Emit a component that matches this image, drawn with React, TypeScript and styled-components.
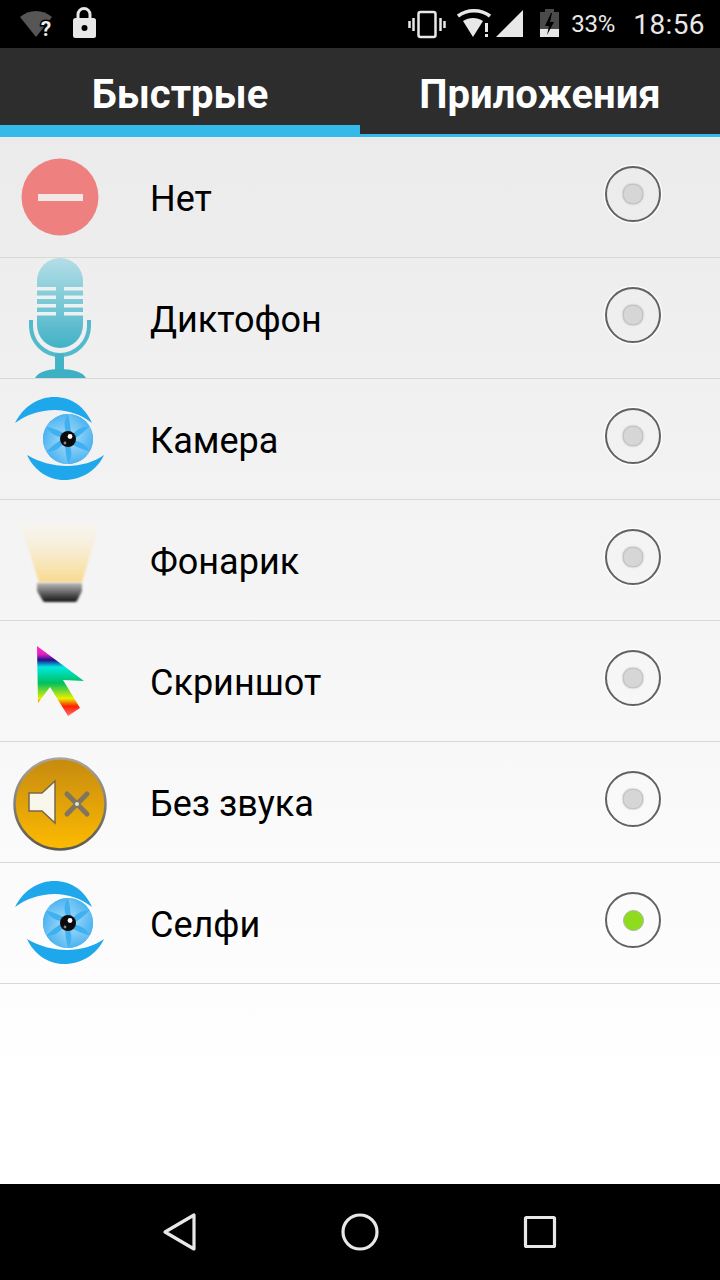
import React from 'react';
import styled, { createGlobalStyle } from 'styled-components';

const GlobalStyle = createGlobalStyle`
  html, body {
    margin: 0;
    padding: 0;
    background: #000;
  }
  body {
    font-family: Roboto, "Liberation Sans", sans-serif;
  }
`;

const Page = styled.div`
  width: 720px;
  height: 1280px;
  display: flex;
  flex-direction: column;
  overflow: hidden;
`;

const StatusBar = styled.div`
  height: 48px;
  flex: none;
  background: #000;
  color: #e8e8e8;
  display: flex;
  justify-content: space-between;
  align-items: center;
`;

const StatusGroup = styled.div`
  display: flex;
  align-items: center;
`;

const Glyph = styled.svg<{ $gap?: number }>`
  display: block;
  flex: none;
  margin-right: ${(p) => p.$gap ?? 0}px;
`;

const Percent = styled.span`
  font-size: 24px;
  letter-spacing: -0.3px;
  margin-left: 12px;
  width: 62px;
`;

const Clock = styled.span`
  font-size: 28px;
  letter-spacing: 0.4px;
  margin-right: 15px;
`;

const TabBar = styled.div`
  height: 89px;
  flex: none;
  display: flex;
  background: #2d2d2d;
`;

const Tab = styled.div<{ $active?: boolean }>`
  flex: 1;
  box-sizing: border-box;
  padding-top: 26px;
  text-align: center;
  color: #fff;
  font-size: 40px;
  font-weight: 700;
  line-height: 42px;
  border-bottom: ${(p) => (p.$active ? 12 : 3)}px solid #35b8ea;
`;

const List = styled.div`
  flex: 1;
  background: linear-gradient(#ebebeb, #ffffff 90%);
`;

const Row = styled.div`
  height: 120px;
  display: flex;
  align-items: center;
  border-bottom: 1px solid #d8d8d8;
`;

const IconSlot = styled.div`
  width: 120px;
  height: 120px;
  flex: none;
  margin-right: 30px;
`;

const Label = styled.span`
  flex: 1;
  font-size: 36px;
  color: #000;
  padding-top: 3px;
`;

const Radio = styled.div`
  width: 52px;
  height: 52px;
  margin: 0 59px 6px 0;
  border: 2.5px solid #626262;
  border-radius: 50%;
  box-shadow: 0 0 0 1.5px rgba(255, 255, 255, 0.8);
  display: flex;
  align-items: center;
  justify-content: center;
`;

const RadioDot = styled.div<{ $on?: boolean }>`
  width: ${(p) => (p.$on ? 21 : 20)}px;
  height: ${(p) => (p.$on ? 21 : 20)}px;
  box-sizing: border-box;
  border-radius: ${(p) => (p.$on ? '50%' : '9px')};
  background: ${(p) => (p.$on ? '#8fdc1e' : '#d6d6d6')};
  border: 1px solid ${(p) => (p.$on ? '#a9b89a' : '#c4c4c4')};
  box-shadow: ${(p) => (p.$on ? 'none' : '0 0 2px #9a9a9a')};
`;

const NavBar = styled.div`
  height: 96px;
  flex: none;
  background: #000;
  display: flex;
  justify-content: center;
  align-items: center;
`;

const NavSlot = styled.div`
  width: 180px;
  display: flex;
  justify-content: center;
`;

const NoneIcon = () => (
  <svg width="120" height="120" viewBox="0 0 120 120">
    <circle cx="60" cy="60" r="38.5" fill="#ef8080" />
    <rect x="38" y="57" width="45" height="7" fill="#f4e8e6" />
  </svg>
);

const MicIcon = () => (
  <svg width="120" height="120" viewBox="0 0 120 120">
    <defs>
      <linearGradient id="micFill" x1="0" y1="0" x2="0" y2="1">
        <stop offset="0" stopColor="#b4dee6" />
        <stop offset="1" stopColor="#42b2c6" />
      </linearGradient>
    </defs>
    <path d="M37 23a23 23 0 0 1 46 0v44a23 23 0 0 1-46 0z" fill="url(#micFill)" />
    <g fill="#ecf1f2">
      {[29, 37.5, 46, 54].map((y) => (
        <React.Fragment key={y}>
          <rect x="37" y={y} width="19" height="3.5" />
          <rect x="64" y={y} width="19" height="3.5" />
        </React.Fragment>
      ))}
    </g>
    <path d="M31 62v6a29 29 0 0 0 58 0v-6" fill="none" stroke="#53bacb" strokeWidth="4" />
    <rect x="55" y="96" width="9" height="18" fill="#45b3c6" />
    <path d="M35 120c3-6 13-9 25-9s23 3 26 9z" fill="#3eb0c4" />
  </svg>
);

const blades = [0, 60, 120, 180, 240, 300];

const EyeIcon = ({ id }: { id: string }) => (
  <svg width="120" height="120" viewBox="0 0 120 120">
    <defs>
      <linearGradient id={id} x1="1" y1="0" x2="0" y2="1">
        <stop offset="0" stopColor="#2ca6ef" />
        <stop offset="1" stopColor="#a8dcf8" />
      </linearGradient>
    </defs>
    <path d="M15 44C24 26 40 18 54 18c18 0 31 10 38 26-10-8-24-13-37-13-15 0-29 5-40 13z" fill="#1ea7ea" />
    <path d="M27 76c12 7 26 11 40 11 14 0 27-4 37-11-7 15-22 25-40 25-16 0-30-10-37-25z" fill="#1ea7ea" />
    <circle cx="68" cy="60" r="25" fill="#3fb0f0" />
    {blades.map((deg) => (
      <path
        key={deg}
        d="M68 35a25 25 0 0 1 21.6 12.5C82 47 76 50 71 58c0-8-1-16-3-23z"
        fill={`url(#${id})`}
        transform={`rotate(${deg} 68 60)`}
      />
    ))}
    <circle cx="68" cy="60" r="8" fill="#0b0b0b" />
    <circle cx="70" cy="57.5" r="2.4" fill="#fff" />
    <circle cx="65" cy="64" r="1.4" fill="#888" />
  </svg>
);

const LampIcon = () => (
  <svg width="120" height="120" viewBox="0 0 120 120">
    <defs>
      <linearGradient id="lampBeam" x1="0" y1="0" x2="0" y2="1">
        <stop offset="0" stopColor="#fdf6e2" stopOpacity="0.25" />
        <stop offset="1" stopColor="#f8d88c" />
      </linearGradient>
      <linearGradient id="lampBase" x1="0" y1="0" x2="0" y2="1">
        <stop offset="0" stopColor="#b8b8b8" />
        <stop offset="1" stopColor="#141414" />
      </linearGradient>
      <filter id="lampBlur">
        <feGaussianBlur stdDeviation="1" />
      </filter>
    </defs>
    <g filter="url(#lampBlur)">
      <path d="M20 23h80L82 82H39z" fill="url(#lampBeam)" />
      <path d="M37 83h45v8l-5 10c-1 1-2 1-3 1H46c-1 0-2 0-3-1l-6-10z" fill="url(#lampBase)" />
    </g>
  </svg>
);

const CursorIcon = () => (
  <svg width="120" height="120" viewBox="0 0 120 120">
    <defs>
      <linearGradient id="cursorFill" x1="0" y1="0" x2="0" y2="1">
        <stop offset="0" stopColor="#ff30c8" />
        <stop offset="0.12" stopColor="#e020c0" />
        <stop offset="0.2" stopColor="#201090" />
        <stop offset="0.3" stopColor="#00e8e0" />
        <stop offset="0.53" stopColor="#00c060" />
        <stop offset="0.75" stopColor="#e8f000" />
        <stop offset="0.86" stopColor="#ff2000" />
        <stop offset="1" stopColor="#ff7070" />
      </linearGradient>
    </defs>
    <path d="M37 25l47 35-21-1 17 28-12 8-18-29-12 16z" fill="url(#cursorFill)" />
  </svg>
);

const MuteIcon = () => (
  <svg width="120" height="120" viewBox="0 0 120 120">
    <defs>
      <linearGradient id="muteFill" x1="0" y1="0" x2="0" y2="1">
        <stop offset="0" stopColor="#c68a10" />
        <stop offset="1" stopColor="#fdbb00" />
      </linearGradient>
      <linearGradient id="muteRim" x1="0" y1="0" x2="0" y2="1">
        <stop offset="0" stopColor="#a8a69c" />
        <stop offset="1" stopColor="#5c5a50" />
      </linearGradient>
    </defs>
    <circle cx="60" cy="62" r="45.5" fill="url(#muteFill)" stroke="url(#muteRim)" strokeWidth="2.5" />
    <path d="M29 51h13l13-12v42L42 69H29z" fill="#f9f6ec" stroke="#77684a" strokeWidth="1.5" />
    <path d="M67 52l20 20M87 52L67 72" stroke="#7e7660" strokeWidth="5" strokeLinecap="round" />
    <circle cx="77" cy="62" r="2" fill="#e8e2d0" />
  </svg>
);

const items: { label: string; icon: React.ReactNode; on?: boolean }[] = [
  { label: 'Нет', icon: <NoneIcon /> },
  { label: 'Диктофон', icon: <MicIcon /> },
  { label: 'Камера', icon: <EyeIcon id="eyeCamera" /> },
  { label: 'Фонарик', icon: <LampIcon /> },
  { label: 'Скриншот', icon: <CursorIcon /> },
  { label: 'Без звука', icon: <MuteIcon /> },
  { label: 'Селфи', icon: <EyeIcon id="eyeSelfie" />, on: true },
];

export default function App() {
  return (
    <Page>
      <GlobalStyle />
      <StatusBar>
        <StatusGroup>
          <Glyph width="72" height="48" viewBox="0 0 72 48">
            <path d="M20 17c9-8 23-8 32 0L36 37z" fill="#565656" />
            <text
              x="46"
              y="36"
              fontSize="21"
              fontWeight="700"
              fill="#eee"
              textAnchor="middle"
              stroke="#000"
              strokeWidth="3"
              paintOrder="stroke"
            >
              ?
            </text>
          </Glyph>
          <Glyph width="24" height="48" viewBox="0 0 24 48">
            <path d="M6 19v-4.5a6 6 0 0 1 12 0V19" fill="none" stroke="#e8e8e8" strokeWidth="3" />
            <rect x="1" y="18" width="23" height="20" rx="2.5" fill="#e8e8e8" />
            <circle cx="12.5" cy="28" r="3" fill="#000" />
          </Glyph>
        </StatusGroup>
        <StatusGroup>
          <Glyph $gap={11} width="38" height="48" viewBox="0 0 38 48">
            <rect x="10.5" y="12" width="17" height="25" rx="2" fill="none" stroke="#e8e8e8" strokeWidth="2.5" />
            <path d="M5.5 18v13M1.5 21v7M32.5 18v13M36.5 21v7" stroke="#e8e8e8" strokeWidth="2.5" />
          </Glyph>
          <Glyph $gap={5} width="34" height="48" viewBox="0 0 34 48">
            <path d="M1 16c9-7 23-7 32 0" fill="none" stroke="#e8e8e8" strokeWidth="3.5" />
            <path d="M6 21c6-4 14-4 20 0L16 37z" fill="#e8e8e8" />
            <rect x="28" y="23" width="3" height="9" fill="#e8e8e8" />
            <rect x="28" y="34" width="3" height="3" fill="#e8e8e8" />
          </Glyph>
          <Glyph $gap={17} width="27" height="48" viewBox="0 0 27 48">
            <path d="M27 10v27H0z" fill="#e8e8e8" />
          </Glyph>
          <Glyph width="19" height="48" viewBox="0 0 19 48">
            <path d="M5 12V9h9v3h5v25H0V12z" fill="#4a4a4a" />
            <path d="M0 29h19v8H0z" fill="#e8e8e8" />
            <path d="M11 13l-6 13h4l-2 9 7-13h-4l2-9z" fill="#000" />
          </Glyph>
          <Percent>33%</Percent>
          <Clock>18:56</Clock>
        </StatusGroup>
      </StatusBar>
      <TabBar>
        <Tab $active>Быстрые</Tab>
        <Tab>Приложения</Tab>
      </TabBar>
      <List>
        {items.map((item) => (
          <Row key={item.label}>
            <IconSlot>{item.icon}</IconSlot>
            <Label>{item.label}</Label>
            <Radio>
              <RadioDot $on={item.on} />
            </Radio>
          </Row>
        ))}
      </List>
      <NavBar>
        <NavSlot>
          <svg width="40" height="44" viewBox="0 0 40 44">
            <path d="M5 22L34 5v34z" fill="none" stroke="#e8e8e8" strokeWidth="3.2" strokeLinejoin="round" />
          </svg>
        </NavSlot>
        <NavSlot>
          <svg width="40" height="44" viewBox="0 0 40 44">
            <circle cx="20" cy="22" r="17" fill="none" stroke="#e8e8e8" strokeWidth="3.2" />
          </svg>
        </NavSlot>
        <NavSlot>
          <svg width="40" height="44" viewBox="0 0 40 44">
            <rect x="5.5" y="7.5" width="29" height="29" rx="1" fill="none" stroke="#e8e8e8" strokeWidth="3.2" />
          </svg>
        </NavSlot>
      </NavBar>
    </Page>
  );
}
